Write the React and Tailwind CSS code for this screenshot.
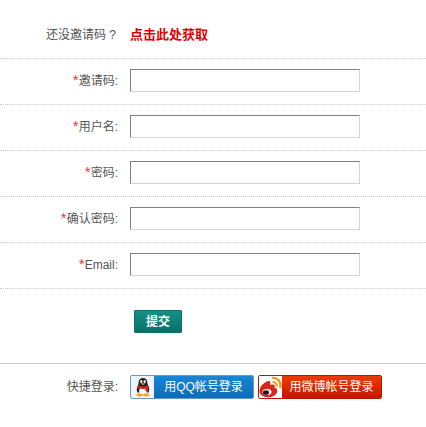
const rows = ["邀请码", "用户名", "密码", "确认密码", "Email"];

function QQIcon() {
  return (
    <svg width="16" height="20" viewBox="0 0 16 20">
      <path d="M8 1 C4.500 1 3.500 4 3.500 7 C2 10 1 13 2.500 15.500 L13.500 15.500 C15 13 14 10 12.500 7 C12.500 4 11.500 1 8 1 Z" fill="#1f1f1f" />
      <ellipse cx="8" cy="14" rx="3.800" ry="4" fill="#fff" />
      <ellipse cx="6.300" cy="4.500" rx="1.100" ry="1.500" fill="#fff" />
      <ellipse cx="9.700" cy="4.500" rx="1.100" ry="1.500" fill="#fff" />
      <path d="M5.500 6.500 Q8 5.800 10.500 6.500 L8 8 Z" fill="#f5a623" />
      <path d="M3 8.500 Q8 10.500 13 8.500 L13.800 11 Q8 13 2.200 11 Z" fill="#d9261c" />
      <path d="M10 11.500 L13 11 L13.200 15 L10.500 14 Z" fill="#d9261c" />
      <ellipse cx="4.700" cy="18" rx="3.200" ry="1.400" fill="#f0a030" />
      <ellipse cx="11.300" cy="18" rx="3.200" ry="1.400" fill="#f0a030" />
    </svg>
  );
}

function WeiboIcon() {
  return (
    <svg width="23" height="22" viewBox="0 0 23 22">
      <path d="M9.500 5 C5 6 0 11 0.500 16 C1.500 20.500 7.500 22 12 21 C16.500 20 19 16.800 18 13.800 C17.500 12.300 16 11.800 15.500 11.600 C16.500 8.800 14.500 7.800 11 9 C11.800 6.500 11.500 4.700 9.500 5 Z" fill="#d9261c" />
      <ellipse cx="8" cy="16" rx="4.500" ry="3" fill="#fff" />
      <ellipse cx="7" cy="16.500" rx="3" ry="2.300" fill="#1b1b1b" />
      <path d="M13 2 C18 1 23 6 21 12" stroke="#f09a1a" strokeWidth="2.400" fill="none" />
      <path d="M13.500 6 C16 5.500 18.300 8 17.500 10.500" stroke="#f09a1a" strokeWidth="2" fill="none" />
    </svg>
  );
}

export default function App() {
  return (
    <div className="w-[426px] h-[427px] bg-white text-xs text-[#555] font-['Liberation_Sans','Noto_Sans_CJK_SC',sans-serif] pt-[13px]">
      {/* invite hint */}
      <div className="h-[46px] pb-0.5 flex items-center border-b border-dotted border-[#ccc]">
        <span className="w-[115px] ml-[46px] -mr-[46px] whitespace-nowrap">还没邀请码 ?</span>
        <a href="#" className="ml-[15px] font-bold text-[13px] text-[#e00000]">点击此处获取</a>
      </div>

      {/* form rows */}
      {rows.map((label) => (
        <div key={label} className="h-[46px] pb-0.5 flex items-center border-b border-dotted border-[#ccc]">
          <label className="w-[118px] text-right">
            <span className="text-[15px] leading-3 text-[#e4393c]">*</span>
            {label}:
          </label>
          <input
            type="text"
            className="ml-3 w-[230px] h-[23px] bg-white border border-[#d4d4d4] border-t-[#808080] border-l-[#808080]"
          />
        </div>
      ))}

      <div className="h-[75px] pl-[134px] pt-[21px] border-b border-[#ccc]">
        <button className="block w-12 h-[23px] rounded-[1px] border border-[#0b6e68] bg-gradient-to-b from-[#12928a] to-[#0a6f69] text-white font-bold">
          提交
        </button>
      </div>

      {/* quick login */}
      <div className="flex items-center mt-[11px]">
        <span className="w-[118px] text-right">快捷登录:</span>
        <a href="#" className="ml-3 w-[124px] h-6 flex rounded-[2px] overflow-hidden border border-[#6a98c4] text-white">
          <span className="w-[23px] bg-[#eef3f9] flex items-center justify-center">
            <QQIcon />
          </span>
          <span className="flex-1 bg-gradient-to-b from-[#1a86d4] to-[#0a6cb8] flex items-center justify-center">
            用QQ帐号登录
          </span>
        </a>
        <a href="#" className="ml-1 w-[124px] h-6 flex rounded-[2px] overflow-hidden border border-[#b01800] text-white">
          <span className="w-[23px] bg-white flex items-center justify-center">
            <WeiboIcon />
          </span>
          <span className="flex-1 bg-gradient-to-b from-[#ee3a00] to-[#c81400] flex items-center justify-center">
            用微博帐号登录
          </span>
        </a>
      </div>
    </div>
  );
}
